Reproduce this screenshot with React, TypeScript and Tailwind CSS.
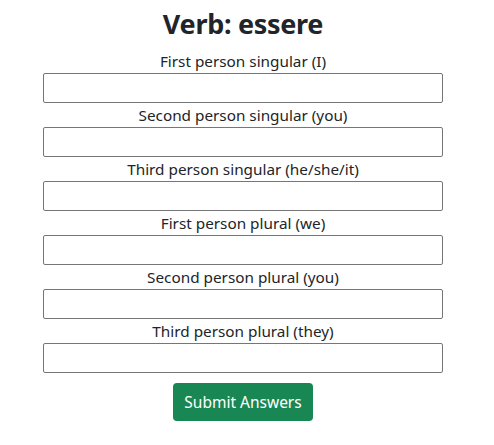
import React from 'react';

const persons = [
  'First person singular (I)',
  'Second person singular (you)',
  'Third person singular (he/she/it)',
  'First person plural (we)',
  'Second person plural (you)',
  'Third person plural (they)',
];

export default function App() {
  return (
    <div className="w-[486px] bg-white text-[#212529] pt-[6px]" style={{ fontFamily: '"Noto Sans", "DejaVu Sans", sans-serif' }}>
      <h1 className="text-center text-[27px] font-bold leading-[36px] mb-[7px] tracking-[-0.3px]">Verb: essere</h1>
      <form className="flex flex-col items-center">
        {persons.map((p) => (
          <div key={p} className="flex flex-col items-center">
            <label className="text-[15.3px] leading-[24px]">{p}</label>
            <input type="text" className="w-[400px] h-[30px] border border-[#767676] rounded-[2px] px-2 outline-none" />
          </div>
        ))}
        <button type="button" className="mt-[10px] h-[38px] px-[11px] rounded-[4px] bg-[#198754] text-white text-[15.5px] leading-[24px]">
          Submit Answers
        </button>
      </form>
    </div>
  );
}
